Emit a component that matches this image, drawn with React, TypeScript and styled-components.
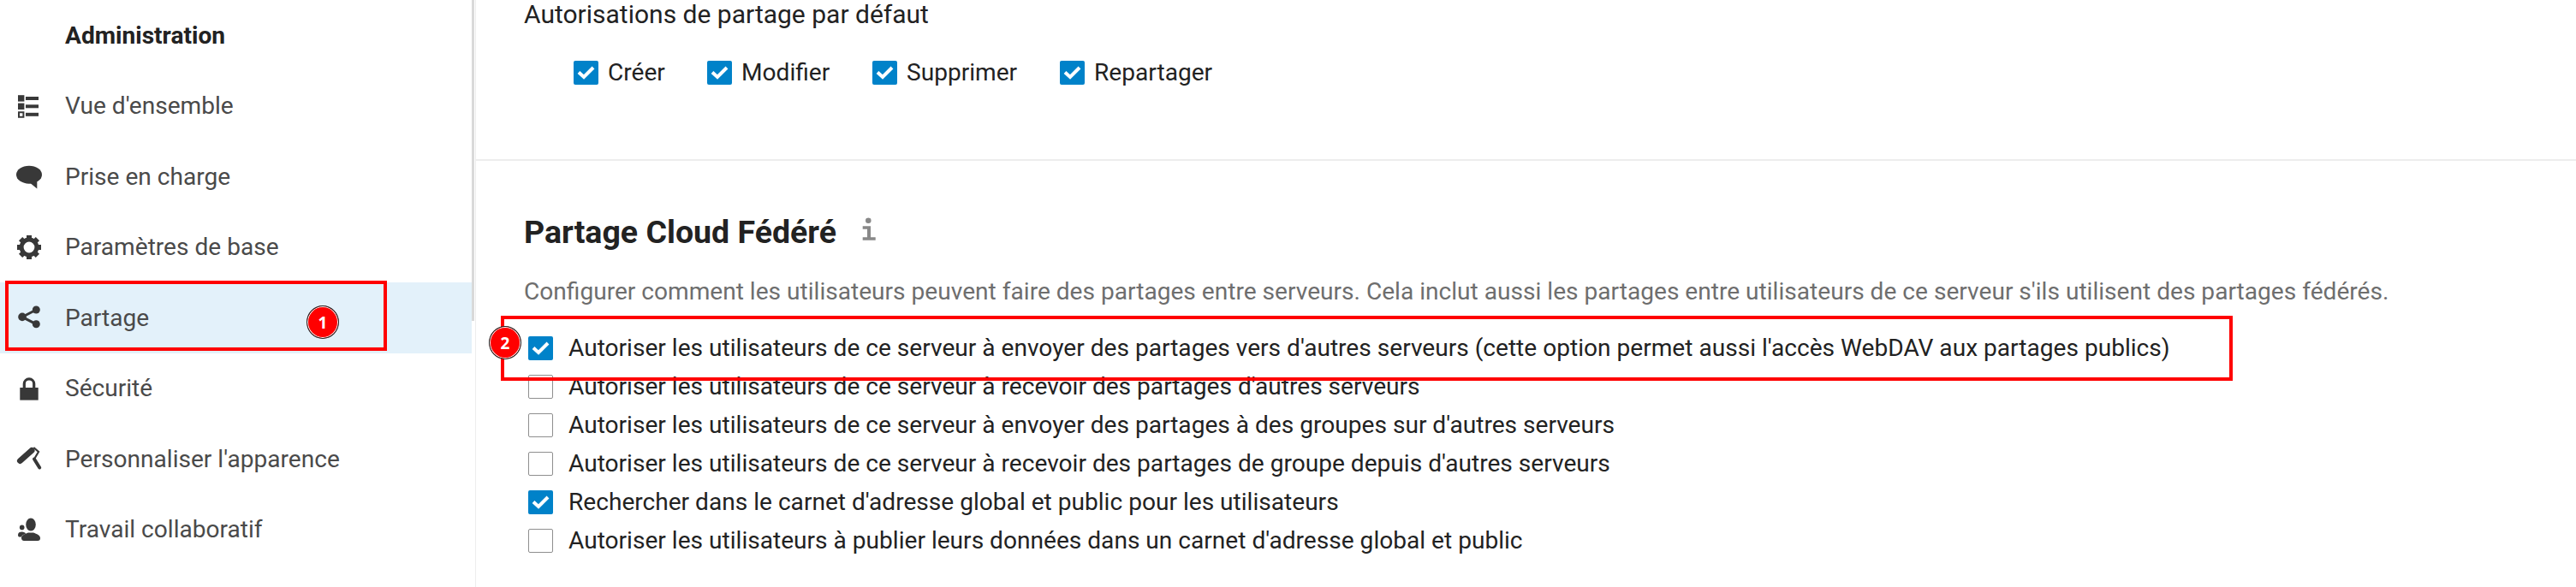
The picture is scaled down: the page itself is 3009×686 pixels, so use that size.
import React from "react";
import styled, { createGlobalStyle } from "styled-components";

const GlobalStyle = createGlobalStyle`
  html, body {
    margin: 0;
    padding: 0;
    background: #fff;
    font-family: Roboto, "Liberation Sans", sans-serif;
  }
`;

const Page = styled.div`
  position: relative;
  display: flex;
  width: 3009px;
  height: 686px;
  overflow: hidden;
  background: #fff;
`;

const Sidebar = styled.nav`
  position: relative;
  width: 555px;
  flex-shrink: 0;
  border-right: 1px solid #ededed;
`;

const Scrollbar = styled.div`
  position: absolute;
  top: 0;
  right: 1px;
  width: 3px;
  height: 375px;
  background: #d9d9d9;
`;

const SidebarTitle = styled.div`
  height: 82.5px;
  display: flex;
  align-items: center;
  padding-left: 76px;
  font-size: 28.1px;
  font-weight: 700;
  color: #222;
`;

const NavRow = styled.div<{ $active?: boolean }>`
  position: relative;
  width: 551px;
  height: 82.5px;
  display: flex;
  align-items: center;
  padding-left: 18px;
  box-sizing: border-box;
  gap: 26px;
  font-size: 28.1px;
  color: #4a4a4a;
  background: ${(props) => (props.$active ? "#e3f1fa" : "transparent")};
`;

const NavIcon = styled.svg`
  width: 32px;
  height: 32px;
  flex-shrink: 0;
  fill: #383838;
  stroke: none;
`;

const Main = styled.main`
  flex: 1;
  min-width: 0;
`;

const TopSection = styled.section`
  height: 186px;
  padding-left: 56px;
  border-bottom: 2px solid #ededed;
`;

const SubTitle = styled.div`
  height: 34px;
  line-height: 34px;
  font-size: 30px;
  color: #222;
`;

const PermRow = styled.div`
  display: flex;
  margin: 36px 0 0 58px;
`;

const PermItem = styled.label<{ $width: number }>`
  display: flex;
  align-items: center;
  gap: 11px;
  width: ${(props) => props.$width}px;
  height: 29px;
  font-size: 28.1px;
  color: #222;
  white-space: nowrap;
`;

const CheckBox = styled.span<{ $checked?: boolean }>`
  width: 29px;
  height: 28px;
  flex-shrink: 0;
  display: flex;
  align-items: center;
  justify-content: center;
  box-sizing: border-box;
  border-radius: 2px;
  background: ${(props) => (props.$checked ? "#0082c9" : "#fff")};
  border: ${(props) => (props.$checked ? "none" : "1.5px solid #8f8f8f")};
`;

const CheckMark = styled.svg`
  width: 21px;
  height: 17px;
  fill: none;
  stroke: #fff;
  stroke-width: 4;
`;

const FederatedSection = styled.section`
  padding: 65px 0 0 56px;
`;

const HeadingRow = styled.div`
  display: flex;
  align-items: center;
  gap: 30px;
  height: 36px;
`;

const Heading = styled.h2`
  margin: 0;
  font-size: 37.5px;
  font-weight: 700;
  color: #222;
  line-height: 36px;
`;

const InfoIcon = styled.svg`
  align-self: flex-start;
  margin-top: 1px;
  width: 16px;
  height: 27px;
  fill: #888;
`;

const Description = styled.p`
  margin: 34px 0 0;
  font-size: 28.1px;
  line-height: 36px;
  color: #6e6e6e;
  white-space: nowrap;
`;

const OptionList = styled.div`
  margin: 25px 0 0 5px;
  display: flex;
  flex-direction: column;
`;

const OptionRow = styled.label`
  display: flex;
  align-items: center;
  gap: 18px;
  height: 45px;
  font-size: 28.1px;
  color: #222;
  white-space: nowrap;
`;

const Highlight = styled.div<{ $x: number; $y: number; $w: number; $h: number }>`
  position: absolute;
  left: ${(props) => props.$x}px;
  top: ${(props) => props.$y}px;
  width: ${(props) => props.$w}px;
  height: ${(props) => props.$h}px;
  box-sizing: border-box;
  border: 4px solid #f00;
  pointer-events: none;
`;

const Badge = styled.div<{ $x: number; $y: number }>`
  position: absolute;
  left: ${(props) => props.$x}px;
  top: ${(props) => props.$y}px;
  width: 38px;
  height: 39px;
  box-sizing: border-box;
  border-radius: 50%;
  background: #f00;
  border: 1px solid #222;
  box-shadow: inset 0 0 0 1px #fff;
  display: flex;
  align-items: center;
  justify-content: center;
  color: #fff;
  font-family: "Open Sans", sans-serif;
  font-size: 19px;
  font-weight: 700;
`;

const ListIcon = () => (
  <NavIcon viewBox="0 0 32 32">
    <rect x="3" y="3.2" width="7.4" height="7.4" />
    <rect x="3" y="12.6" width="7.4" height="7.4" />
    <path fillRule="evenodd" d="M3 22.3h7.4v7.4H3zM5 24.3v3.4h3.4v-3.4z" />
    <rect x="12" y="5" width="15" height="4" />
    <rect x="12" y="14.3" width="15" height="4" />
    <rect x="12" y="23.8" width="15" height="4" />
  </NavIcon>
);

const ChatIcon = () => (
  <NavIcon viewBox="0 0 32 32">
    <ellipse cx="16" cy="14.2" rx="15" ry="10.5" />
    <path d="M17 23.7 25.3 30.5V20z" />
  </NavIcon>
);

const GearIcon = () => (
  <NavIcon viewBox="0 0 32 32">
    <circle cx="16" cy="16" r="8.9" fill="none" stroke="#383838" strokeWidth="5" />
    {[0, 45, 90, 135, 180, 225, 270, 315].map((angle) => (
      <rect key={angle} x="13" y="2" width="6" height="5" transform={`rotate(${angle} 16 16)`} />
    ))}
  </NavIcon>
);

const ShareIcon = () => (
  <NavIcon viewBox="0 0 32 32">
    <path d="M24.3 7 8 15.4 24.3 23.8" fill="none" stroke="#383838" strokeWidth="3" />
    <circle cx="8" cy="15.4" r="4.8" />
    <circle cx="24.3" cy="7" r="4.5" />
    <circle cx="24.3" cy="23.8" r="4.5" />
  </NavIcon>
);

const LockIcon = () => (
  <NavIcon viewBox="0 0 32 32">
    <rect x="5.3" y="15" width="21.4" height="14.6" />
    <path d="M10.3 16v-5.4a5.7 5.7 0 0 1 11.4 0V16" fill="none" stroke="#383838" strokeWidth="3.2" />
  </NavIcon>
);

const RollerIcon = () => (
  <NavIcon viewBox="0 0 32 32">
    <path d="M5.5 18.5 19 6.5" fill="none" stroke="#383838" strokeWidth="7" strokeLinecap="round" />
    <path d="M21.3 3 27 8 22 16.5" fill="none" stroke="#383838" strokeWidth="2.2" />
    <path d="M22 16.5 28.2 26.5" fill="none" stroke="#383838" strokeWidth="4" strokeLinecap="round" />
  </NavIcon>
);

const TeamIcon = () => (
  <NavIcon viewBox="0 0 32 32">
    <ellipse cx="18" cy="10" rx="5.8" ry="7.4" />
    <path d="M7 25.5c0-3 4-4.5 8-6h6c4 1.5 8 3 8 6.5 0 2-1 3-3 3H10c-2 0-3-1.500-3-3.500z" />
    <circle cx="7.7" cy="13.4" r="2.8" />
    <path d="M3 22c0-2.500 2-3.500 4.700-3.500 2 0 4 1 4.300 2.200-2.500 1-4.500 1.800-5 3.800H4.500C3.500 24.500 3 23.500 3 22z" />
  </NavIcon>
);

const Check = () => (
  <CheckMark viewBox="0 0 21 17">
    <path d="M2 8.5 8 14 19 3" />
  </CheckMark>
);

const navItems = [
  { label: "Vue d'ensemble", icon: <ListIcon /> },
  { label: "Prise en charge", icon: <ChatIcon /> },
  { label: "Paramètres de base", icon: <GearIcon /> },
  { label: "Partage", icon: <ShareIcon />, active: true },
  { label: "Sécurité", icon: <LockIcon /> },
  { label: "Personnaliser l'apparence", icon: <RollerIcon /> },
  { label: "Travail collaboratif", icon: <TeamIcon /> },
];

const permissions = [
  { label: "Créer", width: 156 },
  { label: "Modifier", width: 193 },
  { label: "Supprimer", width: 219 },
  { label: "Repartager", width: 200 },
];

const options = [
  { label: "Autoriser les utilisateurs de ce serveur à envoyer des partages vers d'autres serveurs (cette option permet aussi l'accès WebDAV aux partages publics)", checked: true },
  { label: "Autoriser les utilisateurs de ce serveur à recevoir des partages d'autres serveurs", checked: false },
  { label: "Autoriser les utilisateurs de ce serveur à envoyer des partages à des groupes sur d'autres serveurs", checked: false },
  { label: "Autoriser les utilisateurs de ce serveur à recevoir des partages de groupe depuis d'autres serveurs", checked: false },
  { label: "Rechercher dans le carnet d'adresse global et public pour les utilisateurs", checked: true },
  { label: "Autoriser les utilisateurs à publier leurs données dans un carnet d'adresse global et public", checked: false },
];

function App() {
  return (
    <Page>
      <GlobalStyle />
      <Sidebar>
        <Scrollbar />
        <SidebarTitle>Administration</SidebarTitle>
        {navItems.map((item) => (
          <NavRow key={item.label} $active={item.active}>
            {item.icon}
            <span>{item.label}</span>
          </NavRow>
        ))}
      </Sidebar>
      <Main>
        <TopSection>
          <SubTitle>Autorisations de partage par défaut</SubTitle>
          <PermRow>
            {permissions.map((perm) => (
              <PermItem key={perm.label} $width={perm.width}>
                <CheckBox $checked>
                  <Check />
                </CheckBox>
                {perm.label}
              </PermItem>
            ))}
          </PermRow>
        </TopSection>
        <FederatedSection>
          <HeadingRow>
            <Heading>Partage Cloud Fédéré</Heading>
            <InfoIcon viewBox="0 0 16 27">
              <circle cx="7.3" cy="3.7" r="3.3" />
              <path d="M.7 10.3H10v13h5.700v3.400H.7v-3.400H6v-9.600H.7z" />
            </InfoIcon>
          </HeadingRow>
          <Description>
            Configurer comment les utilisateurs peuvent faire des partages entre serveurs. Cela inclut aussi les partages entre utilisateurs de ce serveur s'ils utilisent des partages fédérés.
          </Description>
          <OptionList>
            {options.map((option) => (
              <OptionRow key={option.label}>
                <CheckBox $checked={option.checked}>{option.checked && <Check />}</CheckBox>
                {option.label}
              </OptionRow>
            ))}
          </OptionList>
        </FederatedSection>
      </Main>
      <Highlight $x={6} $y={328} $w={446} $h={82} />
      <Badge $x={358} $y={357}>1</Badge>
      <Highlight $x={585} $y={369} $w={2023} $h={76} />
      <Badge $x={571} $y={381}>2</Badge>
    </Page>
  );
}

export default App;
